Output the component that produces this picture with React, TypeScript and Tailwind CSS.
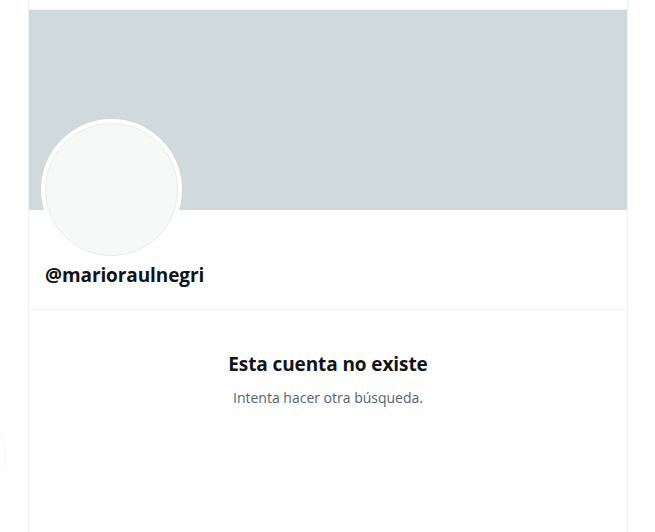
import React from 'react';

const App: React.FC = () => {
  return (
    <div className="relative min-h-[532px] w-[655px] overflow-hidden bg-white font-['Open_Sans',sans-serif] text-[#0f1419]">
      {/* faint floating element at left edge */}
      <div className="absolute left-[-44px] top-[424px] h-[60px] w-[48px] rounded-full bg-white shadow-[0_0_5px_rgba(0,0,0,0.04)]"></div>

      <div className="ml-[28px] flex min-h-[532px] w-[600px] flex-col border-x border-[#eff3f4]">
        <div className="h-[10px] border-b border-[#eff3f4]"></div>

        {/* Banner */}
        <div className="h-[200px] bg-[#cfd9de]"></div>

        {/* Profile head */}
        <div className="flex flex-col border-b border-[#eff3f4] px-[12px] pb-[21px]">
          <div className="-mt-[91px] h-[141px] w-[141px] rounded-full bg-white p-[4px]">
            <div className="h-full w-full rounded-full border border-[#e6ecee] bg-[#f7f9f9]"></div>
          </div>
          <div className="mt-[2px] pl-[4px] text-[19px] font-bold leading-[26px] tracking-[-0.1px]">
            @marioraulnegri
          </div>
        </div>

        {/* Empty state */}
        <div className="flex flex-col items-center pt-[40px]">
          <h2 className="text-[19px] font-bold leading-[28px] tracking-[-0.1px]">Esta cuenta no existe</h2>
          <p className="mt-[10px] text-[14px] leading-[20px] text-[#536471]">Intenta hacer otra búsqueda.</p>
        </div>
      </div>
    </div>
  );
};

export default App;
